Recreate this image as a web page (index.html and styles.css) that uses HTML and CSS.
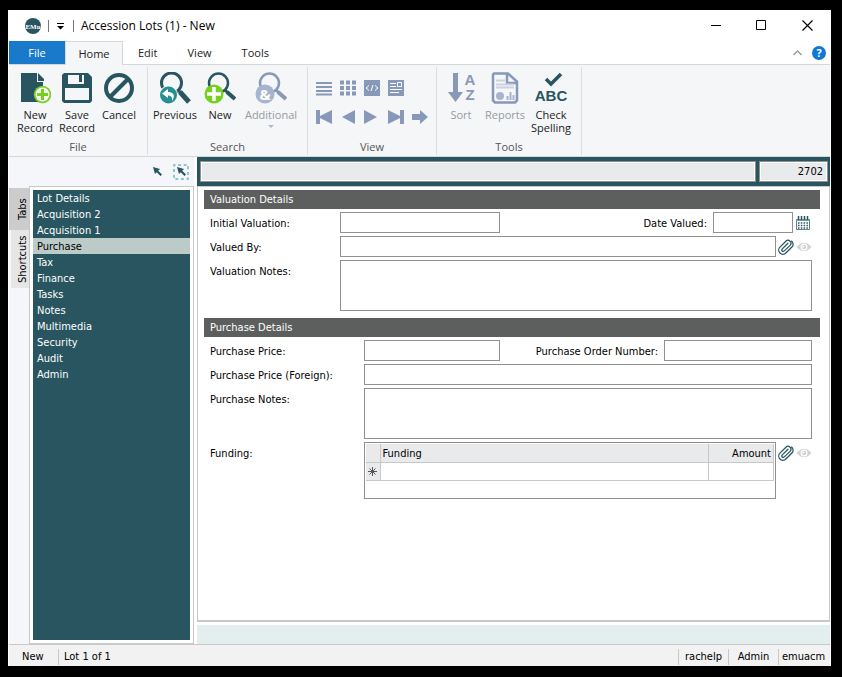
FILE: index.html
```html
<!DOCTYPE html>
<html lang="en">
<head>
<meta charset="utf-8">
<title>Accession Lots (1) - New</title>
<link rel="stylesheet" href="styles.css">
</head>
<body>
<svg class="sprite" aria-hidden="true">
  <symbol id="clip" viewBox="1 0 23 23">
    <path d="m22 10.500-9.700 9.700a6 6 0 0 1-8.500-8.500l8.500-8.500a4.200 4.200 0 1 1 6 6l-8.600 8.200a2 2 0 0 1-2.800-2.800l8.400-8.400M22 10.500c1-2 1-6-1.500-7.500" fill="none" stroke="#285560" stroke-width="1.800" stroke-linecap="round"/>
  </symbol>
  <symbol id="eye" viewBox="0 0 16 16">
    <path d="M.5 8Q8-1.500 15.500 8 8 17.500.5 8Z" transform="translate(0 .9) scale(1 .89)" fill="#d2d2d2"/>
    <circle cx="8" cy="8" r="3.500" fill="#fff"/><circle cx="8" cy="8" r="2.300" fill="#d2d2d2"/><circle cx="7.200" cy="7.400" r="1" fill="#fff"/>
  </symbol>
</svg>
<div class="window">
  <header class="titlebar">
    <svg class="logo" viewBox="0 0 16 16"><circle cx="8" cy="8" r="8" fill="#285560"/><text x="8" y="10.500" text-anchor="middle" class="logo-text">EMu</text></svg>
    <span class="tick"></span>
    <button class="plain quick" aria-label="Customize quick access"><svg viewBox="0 0 8 8" width="8" height="8"><path d="M0 1.500h7" stroke="#000"/><path d="M0 4h7L3.500 7.500Z"/></svg></button>
    <span class="tick"></span>
    <h1>Accession Lots (1) - New</h1>
    <div class="controls">
      <button class="plain" aria-label="Minimize"><svg viewBox="0 0 11 11"><path d="M1 5.500h10" stroke="#000"/></svg></button>
      <button class="plain" aria-label="Maximize"><svg viewBox="0 0 11 11"><path d="M.5.5h9v9h-9z" fill="none" stroke="#000"/></svg></button>
      <button class="plain" aria-label="Close"><svg viewBox="0 0 11 11"><path d="m.5.500 10 10m0-10-10 10" stroke="#000" stroke-width="1.200"/></svg></button>
    </div>
  </header>

  <nav class="ribbon-tabs">
    <button class="file">File</button>
    <button class="active">Home</button>
    <button>Edit</button>
    <button>View</button>
    <button>Tools</button>
    <div class="tab-extras">
      <button class="plain" aria-label="Collapse ribbon"><svg width="9" height="6" viewBox="0 0 9 6"><path d="M.5 5 4.500 1l4 4" fill="none" stroke="#999" stroke-width="1.400"/></svg></button>
      <button class="help" aria-label="Help">?</button>
    </div>
  </nav>

  <section class="ribbon">
    <div class="group file-group">
      <div class="tools">
        <button class="tool"><svg viewBox="0 0 32 32"><path d="M2 1h16v9h6v20H2zM19 1l6 6v2h-6z" fill="#285560"/><circle cx="23.500" cy="22.500" r="8.700" fill="#76d020"/><circle cx="23.500" cy="22.500" r="7" fill="#f8fdf3"/><path d="M23.500 17v11M18 22.500h11" stroke="#76d020" stroke-width="3"/></svg>New<br>Record</button>
        <button class="tool"><svg viewBox="0 0 32 32"><path d="M3 1h24l4 4v24l-2 2H3l-2-2V3z" fill="#285560"/><path d="M7 3h16v9H7zM4 16h24v12H4z" fill="#f4f6f8"/><path d="M18 3h3v7h-3z" fill="#285560"/></svg>Save<br>Record</button>
        <button class="tool"><svg viewBox="0 0 32 32"><circle cx="16" cy="16" r="13" fill="none" stroke="#285560" stroke-width="4"/><path d="M7 25 25 7" stroke="#285560" stroke-width="4"/></svg>Cancel</button>
      </div>
      <h2>File</h2>
    </div>
    <div class="group search-group">
      <div class="tools">
        <button class="tool"><svg viewBox="0 0 32 32"><circle cx="12.500" cy="11" r="10" fill="none" stroke="#285560" stroke-width="3"/><path d="m19 18 4 4" stroke="#285560" stroke-width="3"/><path d="m21 20 9 10" stroke="#285560" stroke-width="5"/><circle cx="9.500" cy="23" r="9.500" fill="#f4f6f8"/><circle cx="9.500" cy="23" r="8.500" fill="#268f94"/><path d="M3 21.500 9 17v3c6 0 7.500 4 4 9 .5-4-1-5.500-4-5.500V26z" fill="#fff"/></svg>Previous</button>
        <button class="tool"><svg viewBox="0 0 32 32"><circle cx="14.500" cy="11" r="9.500" fill="none" stroke="#285560" stroke-width="2.500"/><path d="m21 18 4 4" stroke="#285560" stroke-width="3"/><path d="m23 20 8 7" stroke="#285560" stroke-width="4"/><circle cx="10" cy="22" r="9.500" fill="#76d020"/><path d="M10 15v14M3 22h14" stroke="#fff" stroke-width="3.500"/></svg>New</button>
        <button class="tool" disabled><svg viewBox="0 0 32 32"><circle cx="14.500" cy="11" r="9.500" fill="none" stroke="#8798b8" stroke-width="2.500"/><path d="m21 18 4 4" stroke="#8798b8" stroke-width="3"/><path d="m23 20 8 7" stroke="#8798b8" stroke-width="4"/><circle cx="10" cy="22" r="9.500" fill="#a7b4cf"/><text x="10" y="28" text-anchor="middle" class="amp">&amp;</text></svg>Additional<span class="caret"></span></button>
      </div>
      <h2>Search</h2>
    </div>
    <div class="group view-group">
      <div class="view-tools">
        <button class="plain" aria-label="List" disabled><svg viewBox="0 0 16 16"><path d="M0 3h16M0 7h16M0 11h16M0 14.500h16" stroke="#8798b8" stroke-width="2"/></svg></button>
        <button class="plain" aria-label="Grid" disabled><svg viewBox="0 0 16 16"><path d="M0 2.500h16M0 8h16M0 13.500h16" stroke="#8798b8" stroke-width="4" stroke-dasharray="4 2"/></svg></button>
        <button class="plain" aria-label="Code" disabled><svg viewBox="0 0 16 16"><path d="M0 0h16v16H0z" fill="#8798b8"/><path d="m5 5.500-3 2.500 3 2.500m6-5 3 2.500-3 2.500M9 5l-2 6" fill="none" stroke="#fff"/></svg></button>
        <button class="plain" aria-label="Details" disabled><svg viewBox="0 0 16 16"><path d="M0 0h16v16H0z" fill="#8798b8"/><path d="M2 3.500h6M2 6.500h6M2 9.500h12M2 12.500h9M9.500 2.500h4v4h-4z" fill="none" stroke="#fff"/></svg></button>
        <span></span>
        <button class="plain" aria-label="First" disabled><svg viewBox="0 0 16 16"><path d="M0 1h4v6l12-6v14L4 9v6H0z" fill="#8798b8"/></svg></button>
        <button class="plain" aria-label="Back" disabled><svg viewBox="0 0 16 16"><path d="M15 1v14L2 8z" fill="#8798b8"/></svg></button>
        <button class="plain" aria-label="Forward" disabled><svg viewBox="0 0 16 16"><path d="M0 1v14l13-7z" fill="#8798b8"/></svg></button>
        <button class="plain" aria-label="Last" disabled><svg viewBox="0 0 16 16"><path d="M16 1h-4v6L0 1v14l12-6v6h4z" fill="#8798b8"/></svg></button>
        <button class="plain" aria-label="Go to" disabled><svg viewBox="0 0 16 16"><path d="M0 5h8V1l8 7-8 7v-4H0z" fill="#8798b8"/></svg></button>
      </div>
      <h2>View</h2>
    </div>
    <div class="group tools-group">
      <div class="tools">
        <button class="tool" disabled><svg viewBox="0 0 32 32"><path d="M8 1h5v19h5l-7.500 10L3 20h5z" fill="#8798b8"/><text x="25" y="13" text-anchor="middle" class="az">A</text><text x="25" y="28" text-anchor="middle" class="az">Z</text></svg>Sort</button>
        <button class="tool" disabled><svg viewBox="0 0 32 32"><path d="M5 1.500h14l9 8v19l-2 2H6l-2-2v-26z" fill="#f4f6f8" stroke="#8798b8" stroke-width="2.500"/><path d="M18 2v9h9" fill="none" stroke="#8798b8" stroke-width="2.500"/><path d="M7 8.500h9M7 12.500h18M7 15.500h18" stroke="#cbd3e2" stroke-width="2"/><circle cx="11" cy="24" r="4" fill="#a7b4cf"/><path d="M18.500 28v-4M21.500 28v-8M24.500 28v-5" stroke="#a7b4cf" stroke-width="2"/></svg>Reports</button>
        <button class="tool"><svg viewBox="0 0 32 32"><path d="m11 7 5 5 10-10" fill="none" stroke="#285560" stroke-width="3.500"/><text x="16" y="29" text-anchor="middle" class="abc">ABC</text></svg>Check<br>Spelling</button>
      </div>
      <h2>Tools</h2>
    </div>
  </section>

  <div class="body">
    <aside>
      <div class="side-tools">
        <button class="plain" aria-label="Select"><svg viewBox="0 0 16 16"><path d="m4 3 7 2-1.800 1.800L13 10.500 11.500 12 7.800 8.300 6 10z" fill="#285560"/></svg></button>
        <button class="plain" aria-label="Select area"><svg viewBox="0 0 16 16"><path d="M1 1h14v14H1z" fill="none" stroke="#6db9bd" stroke-width="1.500" stroke-dasharray="3 2.600" stroke-dashoffset="1.500"/><path d="m4 3 7 2-1.800 1.800L13 10.500 11.500 12 7.800 8.300 6 10z" fill="#285560"/></svg></button>
      </div>
      <div class="side-main">
        <div class="vtabs">
          <button class="active">Tabs</button>
          <button>Shortcuts</button>
        </div>
        <nav class="side-list">
          <a href="#">Lot Details</a>
          <a href="#">Acquisition 2</a>
          <a href="#">Acquisition 1</a>
          <a href="#" class="active">Purchase</a>
          <a href="#">Tax</a>
          <a href="#">Finance</a>
          <a href="#">Tasks</a>
          <a href="#">Notes</a>
          <a href="#">Multimedia</a>
          <a href="#">Security</a>
          <a href="#">Audit</a>
          <a href="#">Admin</a>
        </nav>
      </div>
    </aside>

    <main>
      <div class="record-head">
        <input class="summary" aria-label="Summary" readonly>
        <input class="irn" aria-label="Record number" value="2702" readonly>
      </div>
      <form class="sheet">
        <section class="fields valuation">
          <h3>Valuation Details</h3>
          <div class="row">
            <label for="initial">Initial Valuation:</label>
            <input id="initial" class="price">
            <label for="date" class="second">Date Valued:</label>
            <input id="date" class="date">
            <button type="button" class="plain calendar" aria-label="Calendar"><svg viewBox="0 0 16 16"><path d="M1.500 4.500h13v10h-13z" fill="#fff" stroke="#5d8189"/><path d="M1 4h14v2H1z" fill="#7899a0"/><path d="M3.500 1v4M6.500 1v4M9.500 1v4M12.500 1v4" stroke="#285560" stroke-width="1.500"/><path d="M3 8h10M3 10.500h10M3 13h10" stroke="#285560" stroke-width="1.500" stroke-dasharray="1.500 1.300"/></svg></button>
          </div>
          <div class="row">
            <label for="by">Valued By:</label>
            <input id="by" class="grow">
            <div class="links">
              <button type="button" class="plain" aria-label="Attach"><svg><use href="#clip"/></svg></button>
              <button type="button" class="plain" aria-label="View" disabled><svg><use href="#eye"/></svg></button>
            </div>
          </div>
          <div class="row">
            <label for="vnotes">Valuation Notes:</label>
            <textarea id="vnotes" class="grow"></textarea>
          </div>
        </section>
        <section class="fields purchase">
          <h3>Purchase Details</h3>
          <div class="row">
            <label for="price">Purchase Price:</label>
            <input id="price" class="price">
            <label for="order" class="second">Purchase Order Number:</label>
            <input id="order" class="order">
          </div>
          <div class="row">
            <label for="foreign">Purchase Price (Foreign):</label>
            <input id="foreign" class="grow">
          </div>
          <div class="row">
            <label for="pnotes">Purchase Notes:</label>
            <textarea id="pnotes" class="grow"></textarea>
          </div>
          <div class="row">
            <span class="label" id="funding">Funding:</span>
            <div class="grid-box">
              <table aria-labelledby="funding">
                <thead><tr><th class="mark"></th><th>Funding</th><th class="amount">Amount</th></tr></thead>
                <tbody><tr><th class="mark"><svg width="9" height="9" viewBox="0 0 9 9"><path d="M4.500 0v9M0 4.500h9M1.500 1.500l6 6m0-6-6 6" stroke="#555"/></svg></th><td></td><td></td></tr></tbody>
              </table>
            </div>
            <div class="links">
              <button type="button" class="plain" aria-label="Attach"><svg><use href="#clip"/></svg></button>
              <button type="button" class="plain" aria-label="View" disabled><svg><use href="#eye"/></svg></button>
            </div>
          </div>
        </section>
      </form>
      <div class="strip"></div>
    </main>
  </div>

  <footer>
    <span class="state">New</span>
    <span class="position">Lot 1 of 1</span>
    <span class="cell">rachelp</span>
    <span class="cell">Admin</span>
    <span class="cell">emuacm</span>
  </footer>
</div>
</body>
</html>
```
FILE: styles.css
```css
* { box-sizing: border-box; }

body {
  margin: 0;
  padding: 10px 11px 11px 8px;
  min-height: 100vh;
  display: flex;
  background: #000;
  color: #000;
  font: 11px/16px "DejaVu Sans Condensed", Tahoma, sans-serif;
}

h1, h2, h3 { margin: 0; font: inherit; }
button, input, textarea { font: inherit; color: inherit; margin: 0; }
svg { display: block; flex: none; }
.sprite { position: absolute; width: 0; height: 0; }
.plain { display: grid; place-items: center; padding: 0; border: 0; background: none; }

.window {
  flex: 1;
  min-width: 0;
  display: flex;
  flex-direction: column;
  background: #fff;
  padding: 0 1px;
}

/* Title bar */
.titlebar {
  display: flex;
  align-items: center;
  height: 31px;
  padding-left: 16px;
  font: 12px/16px "Open Sans", sans-serif;
}
.logo { width: 16px; height: 16px; margin-right: 7px; }
.logo-text { font: bold 7px "Liberation Serif", serif; fill: #fff; }
.tick { width: 1px; height: 12px; background: #777; }
.quick { width: 24px; height: 16px; }
.titlebar h1 { margin-left: 7px; }
.controls { display: flex; margin-left: auto; }
.controls button { width: 46px; height: 30px; }
.controls svg { width: 11px; height: 11px; }

/* Ribbon */
.ribbon-tabs {
  display: flex;
  height: 24px;
  box-shadow: inset 0 -1px #d5d8db;
  font: 11px/16px "Open Sans", sans-serif;
  color: #222;
}
.ribbon-tabs > button { padding: 0 15px; border: 0; background: none; }
.ribbon-tabs > .file { width: 56px; background: #1979ca; color: #fff; height: 23px; }
.ribbon-tabs > .active {
  width: 58px;
  padding: 0;
  border: 1px solid #d5d8db;
  border-bottom: 0;
  background: #f4f6f8;
}
.tab-extras { display: flex; align-items: center; gap: 10px; margin-left: auto; padding-right: 4px; }
.help {
  width: 14px;
  height: 14px;
  padding: 0;
  border: 0;
  border-radius: 50%;
  background: #0f78d4;
  color: #fff;
  font: bold 11px/14px "Open Sans", sans-serif;
}

.ribbon {
  display: flex;
  height: 92px;
  padding: 2px 0 1px;
  background: #f4f6f8;
  border-bottom: 1px solid #d5d8db;
  font: 11px/13px "Open Sans", sans-serif;
  color: #222;
}
.group { display: flex; flex-direction: column; justify-content: space-between; border-right: 1px solid #dcdfe2; }
.group h2 { text-align: center; color: #555; line-height: 16px; }
.file-group { width: 139px; }
.search-group { width: 160px; }
.view-group { width: 129px; }
.tools-group { width: 145px; }
.tools { display: flex; padding-left: 5px; }
.tool {
  width: 42px;
  display: flex;
  flex-direction: column;
  align-items: center;
  padding: 5px 0 0;
  border: 0;
  background: none;
  text-align: center;
}
.tool svg { width: 32px; height: 32px; margin-bottom: 4px; }
.tool:disabled { color: #969aa0; }
.search-group .tools { padding-left: 4px; }
.search-group .tool { width: 46px; }
.search-group .tool:nth-child(2) { width: 44px; }
.search-group .tool:nth-child(3) { width: 58px; }
.tools-group .tools { padding-left: 2px; }
.tools-group .tool { width: 44px; }
.tools-group .tool:nth-child(3) { width: 48px; }
.caret { border: 3px solid transparent; border-top-color: #b5b8bc; border-bottom: 0; margin-top: 4px; }
.amp { font: bold 15px "Open Sans", sans-serif; fill: #fff; }
.az { font: bold 15px/1 "Liberation Sans", sans-serif; fill: #8798b8; }
.abc { font: bold 15px/1 "Liberation Sans", sans-serif; fill: #285560; }
.view-tools {
  display: grid;
  grid-template-columns: repeat(5, 16px);
  gap: 13px 8px;
  padding: 13px 0 0 8px;
}
.view-tools svg { width: 16px; height: 16px; }

/* Side panel */
.body { flex: 1; display: flex; gap: 3px; }
aside { width: 185px; display: flex; flex-direction: column; background: #f4f6f9; }
.side-tools { display: flex; justify-content: flex-end; align-items: center; gap: 8px; height: 29px; padding-right: 5px; }
.side-tools svg { width: 16px; height: 16px; }
.side-main { flex: 1; display: flex; }
.vtabs { width: 20px; display: flex; flex-direction: column; align-items: flex-end; padding-top: 2px; }
.vtabs button {
  width: 18px;
  height: 58px;
  padding: 0 5px 0 0;
  border: 0;
  background: #e6e6e6;
  line-height: 13px;
  writing-mode: vertical-rl;
  rotate: 180deg;
}
.vtabs .active { width: 20px; height: 42px; padding-right: 7px; background: #ccc; }
.side-list {
  flex: 1;
  border: 1px solid #c8c8c8;
  padding: 3px;
  background: #285560;
  outline: 3px solid #fff;
  outline-offset: -4px;
  color: #fff;
}
.side-list a {
  display: block;
  padding: 2px 0 0 4px;
  line-height: 14px;
  color: inherit;
  text-decoration: none;
}
.side-list .active { background: #bccbc7; color: #000; }

/* Record */
main { flex: 1; min-width: 0; display: flex; flex-direction: column; gap: 3px; }
.record-head { display: flex; gap: 3px; padding: 4px 2px 4px 3px; background: #285560; margin-bottom: -3px; }
.record-head input {
  height: 21px;
  min-width: 0;
  border: 1px solid #909090;
  background: #e9eaec;
  box-shadow: inset 0 0 0 1px #fff;
  padding: 0 4px;
}
.summary { flex: 1; }
.irn { width: 69px; text-align: right; }
.sheet {
  flex: 1;
  border: 1px solid #c8c8c8;
  border-bottom-width: 2px;
  padding: 3px 9px 0 6px;
}
.fields { display: grid; gap: 3px; margin-bottom: 7px; }
.fields h3 { padding: 2px 6px 1px; background: #5d5f5e; color: #fff; }
.row { display: flex; align-items: flex-start; padding: 0 8px 0 6px; }
.row label, .row .label { padding-top: 4px; }
.valuation .row > :first-child { width: 130px; }
.purchase .row > :first-child { width: 154px; }
.row input, .row textarea {
  display: block;
  min-width: 0;
  height: 21px;
  border: 1px solid #919191;
  border-radius: 0;
  padding: 0 3px;
  background: #fff;
}
.row textarea { height: 51px; resize: none; }
.row .grow { flex: 1; }
.valuation .price { width: 160px; }
.purchase .price { width: 136px; }
.row .date { width: 80px; }
.row .order { width: 148px; }
.row .second { margin-left: auto; padding-right: 6px; }
.calendar { margin-right: 1px; padding: 3px 0 0 2px; }
.row svg { width: 16px; height: 16px; }
.links { display: flex; gap: 2px; padding: 3px 0 0 2px; }
.grid-box { flex: 1; height: 57px; padding: 1px; border: 1px solid #919191; }
table { width: 100%; border-collapse: collapse; table-layout: fixed; }
th, td { height: 18px; padding: 1px 2px 0; border: solid #c8c8c8; border-width: 0 1px 1px 0; font-weight: normal; line-height: 15px; text-align: left; }
.mark { width: 14px; }
th { background: #e9eaec; }
.row .mark svg { width: 9px; height: 9px; }
.amount { width: 65px; text-align: right; }
.strip { height: 19px; background: #e2efee; }

/* Status bar */
footer {
  display: flex;
  height: 22px;
  padding: 4px 2px 1px 0;
  border-top: 1px solid #c8c8c8;
  background: #f2f2f2;
}
.state { width: 49px; padding-left: 13px; }
.position { flex: 1; border-left: 1px solid #c8c8c8; padding-left: 5px; }
.cell { width: 50px; border-left: 1px solid #c8c8c8; text-align: center; }
```
